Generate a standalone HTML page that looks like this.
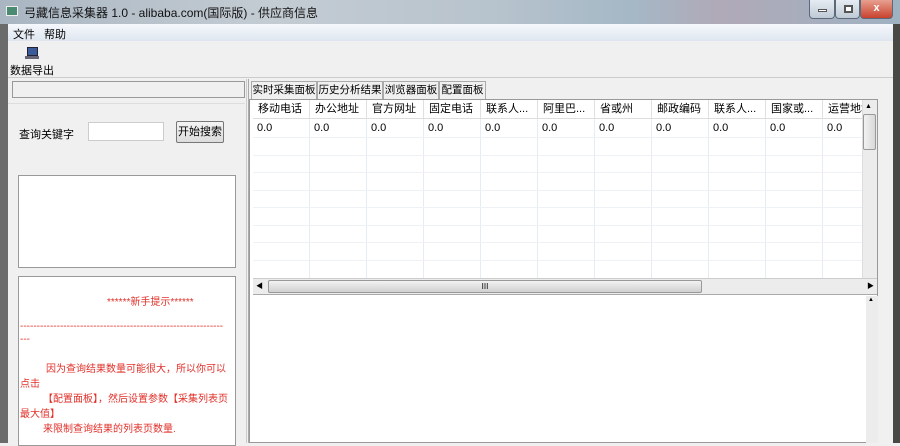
<!DOCTYPE html>
<html><head><meta charset="utf-8"><style>
*{margin:0;padding:0;box-sizing:border-box}
body{width:900px;height:443px;overflow:hidden;position:relative;font-family:"Liberation Sans","Noto Sans CJK SC",sans-serif;font-size:11px;color:#000;background:#f0f0f0}
.abs{position:absolute}
#title{left:0;top:0;width:900px;height:24px;background:linear-gradient(90deg,#a9b6c2 0%,#c4ccd3 30%,#b7c3cd 55%,#a5b8c6 70%,#b0a9b8 80%,#9fb2c2 100%)}
#title span{position:absolute;left:24px;top:4px;font-size:12px;color:#111}
#menu{left:8px;top:24px;width:885px;height:17px;background:linear-gradient(#f5f8fc,#dfe6f0)}
#menu span{position:absolute;top:2px}
#tool{left:8px;top:41px;width:885px;height:37px;background:#f0f0f0;border-bottom:1px solid #ccc}
.win{position:absolute;top:0;height:19px;border:1px solid #5a6a7a;border-top:none;border-radius:0 0 4px 4px}
.col{position:absolute;top:119px;height:159px;border-right:1px solid #e4ecf4}
.hd{position:absolute;top:100px;height:18px;line-height:18px;padding-left:5px;border-right:1px solid #e0e0e0;background:#fff;font-size:11px;white-space:nowrap;overflow:hidden}
.row{position:absolute;left:253px;width:609px;height:1px;background:#eef2f6}
.tab{position:absolute;top:81px;height:18px;line-height:17px;padding:0;text-align:center;border:1px solid #aaa;border-bottom:none;background:#f0f0f0;font-size:10.5px;white-space:nowrap;overflow:hidden}
.red{color:#e0302a;font-size:10px;white-space:nowrap}
</style></head><body>
<div id="title" class="abs"><div class="abs" style="left:6px;top:6px;width:12px;height:10px;background:#4a8a70;border:1px solid #eee"></div><span>弓藏信息采集器 1.0 - alibaba.com(国际版) - 供应商信息</span>
<div class="win" style="left:809px;width:26px;background:linear-gradient(#e6ecf2,#bfcad6)"><div class="abs" style="left:8px;top:9px;width:9px;height:3px;background:#fff;border:1px solid #555"></div></div>
<div class="win" style="left:835px;width:25px;background:linear-gradient(#e6ecf2,#bfcad6)"><div class="abs" style="left:8px;top:5px;width:9px;height:8px;border:2px solid #555;background:#fff"></div></div>
<div class="win" style="left:860px;width:33px;background:linear-gradient(#e8a090,#c8422e);color:#fff;font-weight:bold;text-align:center;line-height:17px">x</div>
</div>
<div class="abs" style="left:0;top:24px;width:8px;height:419px;background:#6b6b6b"></div>
<div class="abs" style="left:893px;top:24px;width:7px;height:419px;background:#4a4845"></div>
<div id="menu" class="abs"><span style="left:5px">文件</span><span style="left:36px">帮助</span></div>
<div id="tool" class="abs">
<div class="abs" style="left:19px;top:6px;width:11px;height:9px;background:#3a5a9a;border:1px solid #223"></div>
<div class="abs" style="left:17px;top:15px;width:14px;height:3px;background:#667"></div>
<span class="abs" style="left:2px;top:21px">数据导出</span></div>
<div class="abs" style="left:12px;top:81px;width:233px;height:17px;border:1px solid #999;background:#f0f0f0"></div>
<div class="abs" style="left:8px;top:103px;width:237px;height:340px;border-top:1px solid #ddd"></div>
<span class="abs" style="left:19px;top:126px">查询关键字</span>
<div class="abs" style="left:88px;top:122px;width:76px;height:19px;background:#fff;border:1px solid #ccc"></div>
<div class="abs" style="left:176px;top:121px;width:48px;height:22px;border:1px solid #777;border-radius:2px;background:linear-gradient(#f4f4f4,#dcdcdc);text-align:center;line-height:20px">开始搜索</div>
<div class="abs" style="left:18px;top:175px;width:218px;height:93px;background:#fff;border:1px solid #999"></div>
<div class="abs" style="left:18px;top:276px;width:218px;height:170px;background:#fff;border:1px solid #999;overflow:hidden">
<div class="red abs" style="left:88px;top:16px">******新手提示******</div>
<div class="red abs" style="left:1px;top:44px;overflow:hidden;width:215px">-------------------------------------------------------------</div>
<div class="red abs" style="left:1px;top:57px">---</div>
<div class="red abs" style="left:1px;top:85px;line-height:15px">
<span style="padding-left:26px">因为查询结果数量可能很大，所以你可以</span><br>点击<br><span style="padding-left:23px">【配置面板】，然后设置参数【采集列表页</span><br>最大值】<br><span style="padding-left:23px">来限制查询结果的列表页数量.</span></div>
</div>
<div class="abs" style="left:246px;top:79px;width:3px;height:364px;border-left:1px solid #ccc;border-right:1px solid #aaa"></div>
<div class="tab" style="left:251px;width:66px">实时采集面板</div>
<div class="tab" style="left:317px;width:66px">历史分析结果</div>
<div class="tab" style="left:383px;width:56px">浏览器面板</div>
<div class="tab" style="left:439px;width:47px">配置面板</div>
<div class="abs" style="left:249px;top:99px;width:629px;height:344px;border:1px solid #999;background:#fff"></div>
<div class="hd" style="left:253px;width:57px">移动电话</div><div class="hd" style="left:310px;width:57px">办公地址</div><div class="hd" style="left:367px;width:57px">官方网址</div><div class="hd" style="left:424px;width:57px">固定电话</div><div class="hd" style="left:481px;width:57px">联系人...</div><div class="hd" style="left:538px;width:57px">阿里巴...</div><div class="hd" style="left:595px;width:57px">省或州</div><div class="hd" style="left:652px;width:57px">邮政编码</div><div class="hd" style="left:709px;width:57px">联系人...</div><div class="hd" style="left:766px;width:57px">国家或...</div><div class="hd" style="left:823px;width:39px;border-right:none">运营地址</div>
<div class="abs" style="left:253px;top:118px;width:609px;height:1px;background:#ddd"></div>
<div class="col" style="left:253px;width:57px"></div><div class="col" style="left:310px;width:57px"></div><div class="col" style="left:367px;width:57px"></div><div class="col" style="left:424px;width:57px"></div><div class="col" style="left:481px;width:57px"></div><div class="col" style="left:538px;width:57px"></div><div class="col" style="left:595px;width:57px"></div><div class="col" style="left:652px;width:57px"></div><div class="col" style="left:709px;width:57px"></div><div class="col" style="left:766px;width:57px"></div>
<div class="abs" style="left:257px;top:122px;width:605px">
<span class="abs" style="left:0">0.0</span><span class="abs" style="left:57px">0.0</span><span class="abs" style="left:114px">0.0</span><span class="abs" style="left:171px">0.0</span><span class="abs" style="left:228px">0.0</span><span class="abs" style="left:285px">0.0</span><span class="abs" style="left:342px">0.0</span><span class="abs" style="left:399px">0.0</span><span class="abs" style="left:456px">0.0</span><span class="abs" style="left:513px">0.0</span><span class="abs" style="left:570px">0.0</span></div>
<div class="row" style="top:137px"></div><div class="row" style="top:155px"></div><div class="row" style="top:172px"></div><div class="row" style="top:190px"></div><div class="row" style="top:207px"></div><div class="row" style="top:225px"></div><div class="row" style="top:242px"></div><div class="row" style="top:260px"></div>
<div class="abs" style="left:862px;top:100px;width:15px;height:178px;background:#ececec;border-left:1px solid #ddd"></div>
<div class="abs" style="left:865px;top:103px;font-size:7px">▲</div>
<div class="abs" style="left:863px;top:114px;width:13px;height:36px;border:1px solid #999;border-radius:2px;background:linear-gradient(90deg,#f2f2f2,#d8d8d8)"></div>
<div class="abs" style="left:253px;top:278px;width:624px;height:17px;background:#ececec;border-top:1px solid #ccc;border-bottom:1px solid #aaa"></div>
<div class="abs" style="left:256px;top:281px;font-size:7px">◀</div>
<div class="abs" style="left:268px;top:280px;width:434px;height:13px;border:1px solid #999;border-radius:2px;background:linear-gradient(#f2f2f2,#d0d0d0);text-align:center;font-size:8px;line-height:11px">III</div>
<div class="abs" style="left:867px;top:281px;font-size:7px">▶</div>
<div class="abs" style="left:866px;top:296px;width:12px;height:147px;background:#ececec"></div>
<div class="abs" style="left:868px;top:297px;font-size:6px">▲</div>
</body></html>
